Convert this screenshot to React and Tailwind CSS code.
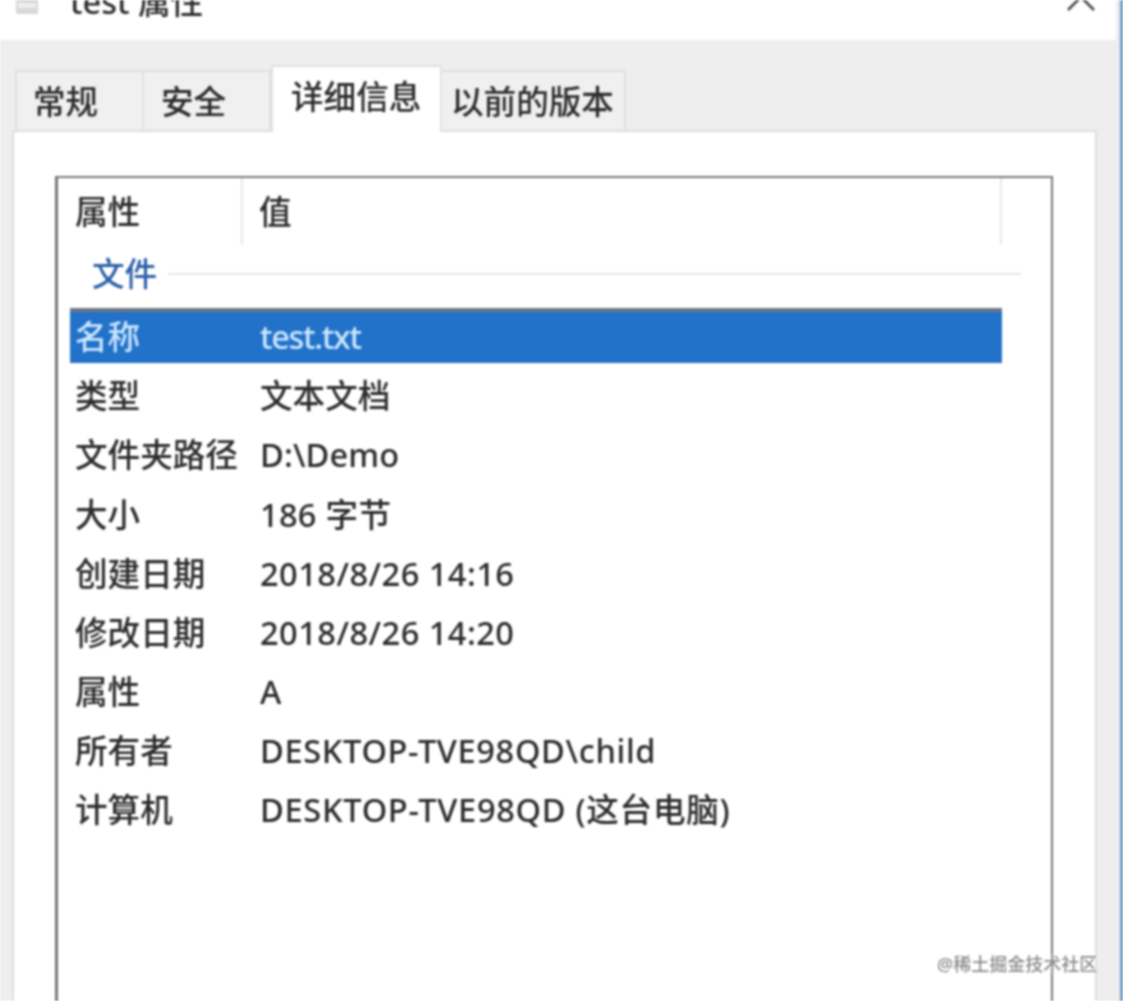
import React from 'react';

const FONT = 'font-["Noto_Sans","Noto_Sans_CJK_SC",sans-serif]';

const tabs = [
  { label: '常规', width: 'w-[129px]', pad: 'pl-[16px]' },
  { label: '安全', width: 'w-[127px]', pad: 'pl-[17px]' },
  { label: '详细信息', width: 'w-[171px]', pad: 'pl-[18px]', active: true },
  { label: '以前的版本', width: 'w-[184px]', pad: 'pl-[9px]' },
];

// track 用来补齐原图西文字体的宽度差
const rows = [
  { name: '类型', value: '文本文档' },
  { name: '文件夹路径', value: 'D:\\Demo', track: 'tracking-[0.1px]' },
  { name: '大小', value: '186 字节', track: 'tracking-[0.3px]' },
  { name: '创建日期', value: '2018/8/26 14:16', track: 'tracking-[0.47px]' },
  { name: '修改日期', value: '2018/8/26 14:20', track: 'tracking-[0.47px]' },
  { name: '属性', value: 'A' },
  { name: '所有者', value: 'DESKTOP-TVE98QD\\child', track: 'tracking-[0.65px]' },
  { name: '计算机', value: 'DESKTOP-TVE98QD (这台电脑)', track: 'tracking-[0.7px]' },
];

function Tab({ tab }) {
  if (tab.active) {
    return (
      <div className={`${tab.width} ${tab.pad} relative z-10 -mb-[2px] h-[67px] shrink-0 border-2 border-b-0 border-[#e0e0e0] bg-white pt-[5px] text-[32.6px] leading-[50px]`}>
        {tab.label}
      </div>
    );
  }
  return (
    <div className={`${tab.width} ${tab.pad} h-[60px] shrink-0 border-2 border-b-0 border-l-0 first:border-l-2 border-[#e0e0e0] bg-[#f0f0f0] pt-[5px] text-[32.6px] leading-[50px]`}>
      {tab.label}
    </div>
  );
}

export default function App() {
  return (
    <div className={`${FONT} relative flex h-[1001px] w-full overflow-hidden bg-[#eeeeef] font-medium text-[#2b2b2b] blur-[0.8px]`}>
      <div className="flex w-[1120px] shrink-0 flex-col">
        {/* 标题栏，上方被截掉 */}
        <div className="mr-[4px] flex h-10 shrink-0 items-start overflow-hidden bg-white pl-[16px]">
          <svg width="22" height="30" viewBox="0 0 22 30" className="-mt-[16px] shrink-0">
            <rect x="0" y="0" width="22" height="30" fill="#d8d8d8" />
            <rect x="2" y="4" width="18" height="5" fill="#f5f5f5" />
            <rect x="2" y="12" width="18" height="3" fill="#f5f5f5" />
            <rect x="2" y="19" width="18" height="5" fill="#eeeeee" />
          </svg>
          <span className="-mt-[16px] ml-[32px] text-[32.6px] leading-[36px]">test 属性</span>
          <svg width="30" height="30" viewBox="0 0 30 30" className="-mt-[18px] ml-auto mr-[20px] shrink-0" fill="none" stroke="#444" strokeWidth="2.5">
            <path d="M2 2 L28 28 M28 2 L2 28" />
          </svg>
        </div>

        {/* 选项卡 */}
        <div className="flex h-[90px] shrink-0 items-end pl-[15px]">
          {tabs.map((tab) => (
            <Tab key={tab.label} tab={tab} />
          ))}
        </div>

        {/* 内容面板 */}
        <div className="ml-3 w-[1085px] flex-1 border-2 border-b-0 border-[#dedede] bg-white pl-[41px] pt-[44px]">
          <div className="h-[900px] w-[998px] border-2 border-l-[3px] border-[#777]">
            {/* 表头 */}
            <div className="flex h-[67px] text-[32.6px] leading-[67px]">
              <div className="w-[185px] border-r-2 border-[#e8e8e8] pl-[17px]">属性</div>
              <div className="w-[759px] border-r-2 border-[#e8e8e8] pl-[16px]">值</div>
            </div>

            {/* 分组 */}
            <div className="flex h-[63px] items-center gap-[11px] pb-[5px] pl-[34px] pr-[30px]">
              <span className="text-[32.6px] leading-none text-[#2b5ea8]">文件</span>
              <div className="h-[2px] flex-1 bg-[#e3e6ea]" />
            </div>

            {/* 选中行 */}
            <div className="ml-[12px] flex h-[55px] w-[932px] items-center border-t-4 border-[#6d7785] bg-[#2272c9] text-[32.6px] text-[#cbe6ff]">
              <div className="w-[190px] pl-[5px]">名称</div>
              <div className="tracking-[-1.3px]">test.txt</div>
            </div>

            <div className="mt-[4px]">
              {rows.map((row) => (
                <div key={row.name} className="flex h-[59.2px] items-center whitespace-nowrap text-[32.6px]">
                  <div className="w-[202px] pl-[17px]">{row.name}</div>
                  <div className={row.track}>{row.value}</div>
                </div>
              ))}
            </div>
          </div>
        </div>
      </div>

      {/* 窗口右边框 */}
      <div className="w-[3px] shrink-0 bg-[#6f9ac6]" />

      {/* 水印 */}
      <div className="absolute left-[937px] top-[952px] text-[18px] leading-[24px] text-[#8a8a8a] [text-shadow:0_0_2px_#fff]">
        @稀土掘金技术社区
      </div>
    </div>
  );
}
